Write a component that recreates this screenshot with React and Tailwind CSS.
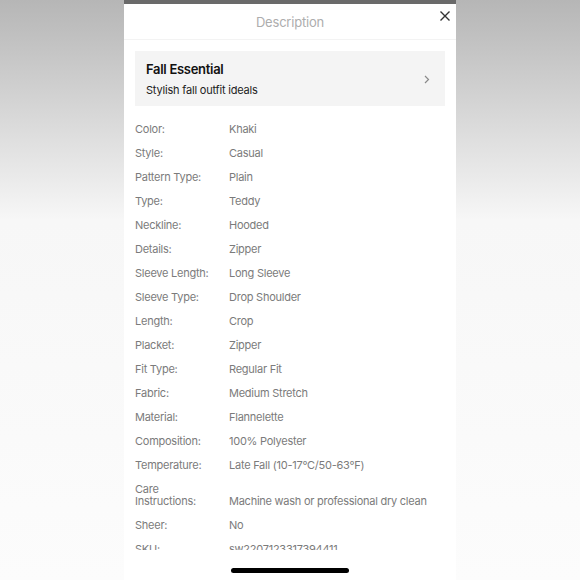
import React from 'react';

const specs = [
  ['Color:', 'Khaki'],
  ['Style:', 'Casual'],
  ['Pattern Type:', 'Plain'],
  ['Type:', 'Teddy'],
  ['Neckline:', 'Hooded'],
  ['Details:', 'Zipper'],
  ['Sleeve Length:', 'Long Sleeve'],
  ['Sleeve Type:', 'Drop Shoulder'],
  ['Length:', 'Crop'],
  ['Placket:', 'Zipper'],
  ['Fit Type:', 'Regular Fit'],
  ['Fabric:', 'Medium Stretch'],
  ['Material:', 'Flannelette'],
  ['Composition:', '100% Polyester'],
  ['Temperature:', 'Late Fall (10-17°C/50-63°F)'],
  ['Care Instructions:', 'Machine wash or professional dry clean'],
  ['Sheer:', 'No'],
  ['SKU:', 'sw2207123317394411'],
];

export default function App() {
  return (
    <div
      className="w-[580px] h-[580px] overflow-hidden flex justify-center bg-linear-to-b from-[#b6b6b6] via-[#f7f7f7] via-[38%] to-[#fcfcfc]"
      style={{ fontFamily: 'Inter, "Noto Sans", sans-serif' }}
    >
      <div className="w-[332px] h-full bg-white flex flex-col">
        <div className="h-[4px] bg-[#6a6a6a]" />
        <div className="relative h-[36px] flex items-center justify-center border-b border-[#f3f3f3] pt-[2px]">
          <span className="text-[13px] tracking-[-0.2px] text-[#adadad]">Description</span>
          <svg
            className="absolute right-[6px] top-[7px]"
            width="10"
            height="10"
            viewBox="0 0 10 10"
            fill="none"
            stroke="#333"
            strokeWidth="1.4"
          >
            <path d="M0.5 0.5L9.5 9.5M9.5 0.5L0.5 9.5" />
          </svg>
        </div>

        <div className="mx-[11px] mt-[11px] h-[55px] bg-[#f4f4f4] px-[11px] flex items-center justify-between">
          <div className="flex flex-col">
            <span className="text-[13px] leading-[16px] font-semibold tracking-[-0.3px] text-[#111]">Fall Essential</span>
            <span className="mt-[6px] text-[11px] leading-[14px] tracking-[-0.2px] text-[#222]">Stylish fall outfit ideals</span>
          </div>
          <svg width="6" height="9" viewBox="0 0 6 9" fill="none" stroke="#8a8a8a" strokeWidth="1.2" className="mr-[4px] mt-[2px]">
            <path d="M1 1l3.5 3.5L1 8" />
          </svg>
        </div>

        <div className="flex-1 overflow-hidden px-[11px] pt-[17px]">
          <div className="flex flex-col gap-[12px]">
            {specs.map(([label, value]) => (
              <div key={label} className="flex items-end text-[11px] leading-[12px] tracking-[-0.25px] text-[#7b7b7b]">
                <span className="w-[94px] shrink-0 pr-2">{label}</span>
                <span>{value}</span>
              </div>
            ))}
          </div>
        </div>

        <div className="h-[30px] flex justify-center pt-[18px]">
          <div className="w-[118px] h-[5px] rounded-full bg-black" />
        </div>
      </div>
    </div>
  );
}
